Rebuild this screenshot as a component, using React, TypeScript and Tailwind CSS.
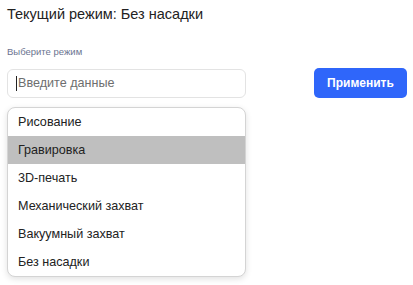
import { useState } from "react";

const modes = ["Рисование", "Гравировка", "3D-печать", "Механический захват", "Вакуумный захват", "Без насадки"];

export default function App() {
  const [value, setValue] = useState("");
  const [hovered] = useState("Гравировка");

  return (
    <div className="w-[413px] h-[285px] bg-white pl-[7px] pt-[4px] text-[#222] font-['Liberation_Sans',Arial,sans-serif]">
      <h1 className="text-[14.5px] leading-[20px] font-normal">Текущий режим: Без насадки</h1>

      <div className="mt-[22px] text-[9.5px] leading-[12px] text-[#6b7490]">Выберите режим</div>

      <div className="mt-[10px] flex items-center">
        <div className="relative w-[239px]">
          <input
            value={value}
            onChange={(e) => setValue(e.target.value)}
            placeholder="Введите данные"
            className="w-full h-[29px] rounded-[6px] border border-[#e3e3e3] pl-[10px] text-[12.6px] text-[#222] placeholder:text-[#6e6e6e] outline-none"
          />
          {!value && <span className="absolute left-[9px] top-[7px] w-[1px] h-[15px] bg-[#222]" />}
        </div>
        <button className="ml-[68px] w-[93px] h-[30px] rounded-[5px] bg-[#2f66fa] text-white text-[12px] font-bold">
          Применить
        </button>
      </div>

      <div className="mt-[9px] w-[239px] rounded-[8px] border border-[#d4d4d4] bg-white shadow-[0_2px_6px_rgba(0,0,0,0.12)] overflow-hidden">
        {modes.map((m) => (
          <div
            key={m}
            className={`h-[28px] flex items-center pl-[10px] text-[12.6px] text-[#222] ${m === hovered ? "bg-[#bfbfbf]" : ""}`}
          >
            {m}
          </div>
        ))}
      </div>
    </div>
  );
}
